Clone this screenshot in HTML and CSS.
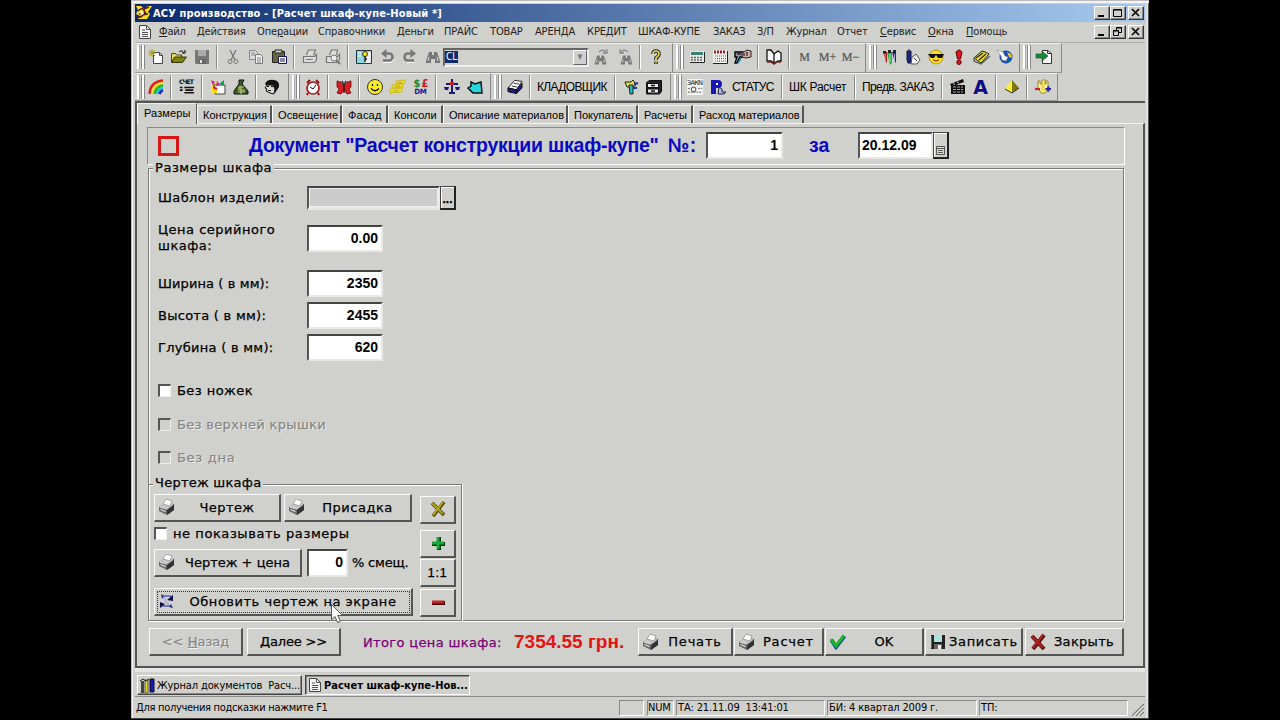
FILE: index.html
```html
<!DOCTYPE html>
<html lang="ru">
<head>
<meta charset="utf-8">
<title>АСУ производство</title>
<link rel="stylesheet" href="styles.css">
</head>
<body>
<svg class="defs" width="0" height="0">
  <symbol id="printer" viewBox="0 0 16 16"><path d="M0 8l6-4 9 1v6l-7 5-8-4z" fill="#666"/><path d="M0 8l6-4 9 1-7 5z" fill="#c8c8c8"/><path d="M8 10l7-5v6l-7 5z" fill="#333"/><path d="M4 5l3-5 6 2-2 5z" fill="#fff" stroke="#888" stroke-width=".7"/><path d="M1.500 10.500l5 2.200" stroke="#ddd" stroke-width="1.300"/><path d="M1 8.300l7 2 6-4.500" stroke="#f4f4f4" stroke-width=".7" fill="none"/></symbol>
  <symbol id="sheet" viewBox="0 0 12 14"><path d="M.5.5h7l4 4v9H.5z" fill="#f4f4f4" stroke="#444"/><path d="M7.500.5v4h4M3 5h3M3 7.500h6M3 9.500h6M3 11.500h6" fill="none" stroke="#555"/></symbol>
  <symbol id="binoc" viewBox="0 0 16 16"><path d="M4 3h3v3h2V3h3l3 9v2h-5v-4H6v4H1v-2z" fill="#777"/><path d="M4 8l-1 4M12 8l1 4" stroke="#ddd"/></symbol>
</svg>
<main class="window">
  <header class="titlebar">
    <svg class="app-icon" viewBox="0 0 17 16"><path d="M1 1h5l3 3 4-3h4l-4 6 2 2-3 5H3l2-3-4-2 2-4z" fill="#ffe21a"/><path d="M3 6q4-4 6-1t-5 4M2 12q5 1 9-5M9 4l5-2M7 10l6-1" stroke="#5a1c10" stroke-width="1.500" fill="none"/><circle cx="7" cy="8" r="1.800" fill="#fff"/></svg>
    <span class="title-text">АСУ производство - [Расчет шкаф-купе-Новый *]</span>
    <div class="winbtns">
      <i><svg viewBox="0 0 14 12"><path d="M3 9h6" stroke="#000" stroke-width="2"/></svg></i>
      <i><svg viewBox="0 0 14 12"><path d="M2.500 2.500h8v7h-8zM2.500 3h8" fill="none" stroke="#000"/></svg></i>
      <i class="close"><svg viewBox="0 0 14 12"><path d="M3 2l7 7M10 2L3 9" stroke="#000" stroke-width="1.600"/></svg></i>
    </div>
  </header>
  <nav class="menu">
    <svg class="menu-doc"><use href="#sheet"/></svg>
    <div class="menu-items">
      <span><u>Ф</u>айл</span><span><u>Д</u>ействия</span><span>Опе<u>р</u>ации</span><span>Справочники</span><span>Деньги</span><span>ПРАЙС</span><span>ТОВАР</span><span>АРЕНДА</span><span>КРЕДИТ</span><span>ШКАФ-КУПЕ</span><span>ЗАКАЗ</span><span>З/П</span><span>Журнал</span><span>Отчет</span><span><u>С</u>ервис</span><span><u>О</u>кна</span><span><u>П</u>омощь</span>
    </div>
    <div class="winbtns">
      <i><svg viewBox="0 0 14 12"><path d="M3 9h6" stroke="#000" stroke-width="2"/></svg></i>
      <i><svg viewBox="0 0 14 12"><path d="M5.500 4V1.500h5v5H8M5.500 2h5M2.500 4.500h5v5h-5zM2.500 5h5" fill="none" stroke="#000"/></svg></i>
      <i class="close"><svg viewBox="0 0 14 12"><path d="M3 2l7 7M10 2L3 9" stroke="#000" stroke-width="1.600"/></svg></i>
    </div>
  </nav>

  <div class="toolbar first">
    <div class="band a1">
      <b><svg viewBox="0 0 16 16"><path d="M5.500 3.500h6l3 3v8h-9z" fill="#fff" stroke="#444"/><path d="M11.500 3.500v3h3" fill="none" stroke="#444"/><path d="M4 0v8M0 4h8M1 1l6 6M7 1L1 7" stroke="#a89c10"/></svg></b>
      <b><svg viewBox="0 0 16 16"><path d="M.5 13V4.500h4l1 1.500h5v2" fill="#e8dc60" stroke="#4a4a08"/><path d="M.5 13.500l3-5.500h12l-4 5.500z" fill="#808018" stroke="#3a3a08"/><path d="M8 3c2-2 4-1 5 1m1-3v3h-3" fill="none" stroke="#000"/></svg></b>
      <b><svg viewBox="0 0 16 16"><path d="M1 1h14v14H2l-1-1z" fill="#777"/><path d="M4 1h8v6H4z" fill="#aaa"/><path d="M5 10h7v5H5z" fill="#666"/><path d="M6 11h2v3H6z" fill="#eee"/></svg></b>
      <s></s>
      <b><svg viewBox="0 0 16 16"><path d="M5 1l5 10M11 1L6 11" stroke="#777" fill="none" stroke-width="1.300"/><circle cx="5" cy="12.500" r="2" fill="none" stroke="#777"/><circle cx="11" cy="12.500" r="2" fill="none" stroke="#777"/></svg></b>
      <b><svg viewBox="0 0 16 16"><path d="M1.500 1.500h6l2 2v7h-8z" fill="#ddd" stroke="#888"/><path d="M7.500 5.500h5l2 2v7h-7z" fill="#eee" stroke="#777"/><path d="M3 4h4M3 6h4M9 9h4M9 11h4M9 13h4" stroke="#888"/></svg></b>
      <b><svg viewBox="0 0 16 16"><path d="M1.500 2.500h12v11h-12z" fill="#67673c" stroke="#222"/><path d="M4 1h7v3H4z" fill="#ccc" stroke="#222"/><path d="M7.500 7.500h8v7h-8z" fill="#fff" stroke="#14145c"/><path d="M9 10h5M9 12h5" stroke="#14145c"/></svg></b>
      <s></s>
      <b><svg viewBox="0 0 16 16"><path d="M4.500 6l2-5h7l-2 5M1.500 7.500h11l2-2v5l-2 3h-11zM4 10.500h7" fill="#ddd" stroke="#777" stroke-width="1.200"/></svg></b>
      <b><svg viewBox="0 0 16 16"><path d="M4.500 6l2-5h6l-1 5M1.500 7.500h11l2-2v5l-2 3h-11z" fill="#ddd" stroke="#777" stroke-width="1.200"/><circle cx="9" cy="9" r="3" fill="#eee" stroke="#777"/><path d="M11 11l4 4" stroke="#777" stroke-width="2"/></svg></b>
      <s></s>
      <b><svg viewBox="0 0 16 16"><path d="M.5 1.500h15v13H.5z" fill="#8ed8dc" stroke="#234"/><path d="M9 3h6v11H9z" fill="#eee"/><circle cx="9" cy="5" r="2.500" fill="#ffe600" stroke="#333"/><path d="M9 7v6M9 10h2" stroke="#222" stroke-width="1.500"/><path d="M2 4h3M2 7h3" stroke="#fff"/></svg></b>
      <b><svg viewBox="0 0 16 16"><path d="M6 4.500h4q3.500 0 3.500 3.500T10 11.500H4" fill="none" stroke="#777" stroke-width="2.400"/><path d="M2 4.500L7.500 0v9z" fill="#777"/><path d="M4 13.500h7q3-.5 4-3.500" fill="none" stroke="#fff"/></svg></b>
      <b><svg viewBox="0 0 16 16"><path d="M10 4.500H6Q2.500 4.500 2.500 8T6 11.500h6" fill="none" stroke="#777" stroke-width="2.400"/><path d="M14 4.500L8.500 0v9z" fill="#777"/><path d="M12 13.500H5" fill="none" stroke="#fff"/></svg></b>
      <b><svg><use href="#binoc"/></svg></b>
      <div class="combo"><mark>CL</mark><em>▼</em></div>
      <b><svg viewBox="0 0 16 16"><use href="#binoc" y="4" width="13" height="13"/><path d="M5 3c3-3 6-2 7 1m1-4v4H9" fill="none" stroke="#888" stroke-width="1.300"/></svg></b>
      <b><svg viewBox="0 0 16 16"><use href="#binoc" x="3" y="4" width="13" height="13"/><path d="M11 3C8 0 5 1 4 4M3 0v4h4" fill="none" stroke="#888" stroke-width="1.300"/></svg></b>
      <s></s>
      <b><svg viewBox="0 0 16 16"><path d="M5 5q0-3 3-3t3 3q0 2-3 4v2M8 12.500v2.500" fill="none" stroke="#222" stroke-width="3.600"/><path d="M5 5q0-3 3-3t3 3q0 2-3 4v2M8 12.800v1.700" fill="none" stroke="#e8e05a" stroke-width="1.600"/></svg></b>
    </div>
    <div class="band a2">
      <b><svg viewBox="0 0 16 16"><path d="M1 2h14v12H1z" fill="#e8e8e8"/><path d="M1 13.500h14.500V3" stroke="#222" fill="none"/><path d="M2 3h12v3H2z" fill="#3c8074"/><path d="M2 8.500h12M2 11h12" stroke="#666" stroke-width="1.500" stroke-dasharray="2 1"/></svg></b>
      <b><svg viewBox="0 0 16 16"><path d="M1 1h14v14H1z" fill="#f2f2ee"/><path d="M1 14.500h14.500V2" stroke="#222" fill="none"/><path d="M2 3h12" stroke="#a02020" stroke-width="3" stroke-dasharray="2 1"/><path d="M3 7h11M3 9.500h11M3 12h11" stroke="#555" stroke-dasharray="1 1"/></svg></b>
      <b><svg viewBox="0 0 16 16"><path d="M0 3h8v5H5l-3 6H0l2-6H0z" fill="#99a" stroke="#000" stroke-width="1.400"/><path d="M7 4l5-3 4 1v6l-5 1-4-1z" fill="#d8b0a0" stroke="#222"/><path d="M2 5h4M9 4v3M12 3v4" stroke="#224" stroke-width="1.300"/><path d="M6 9l-3 5" stroke="#28a" stroke-width="1.500"/></svg></b>
      <s></s>
      <b><svg viewBox="0 0 16 16"><path d="M1 1h4l3 4v9l-3-2H1zM8 5l4-3 3 2v8h-3l-4 2z" fill="#fff" stroke="#111" stroke-width="1.300"/><path d="M1 13h4l3 2 3-2h4" fill="none" stroke="#722" stroke-width="1.500"/></svg></b>
      <s></s>
      <b class="mem">M</b><b class="mem">M+</b><b class="mem">M−</b>
    </div>
    <div class="band a3">
      <b><svg viewBox="0 0 16 16"><path d="M1 3h4v10l-1 1z" fill="#b01818"/><path d="M5 3h5v11L8 16z" fill="#18b838"/><path d="M10 3h4v10l-1 1z" fill="#1828a0"/><path d="M1 2h3v2H1zM6 1h3v3H6zM11 1h3v3h-3z" fill="#222"/><path d="M3 5v8M8 5v8M12.500 5v8" stroke="#fff" stroke-width=".6"/></svg></b>
      <b><svg viewBox="0 0 16 16"><path d="M2 2h4v12H3L2 11z" fill="#1c2890" stroke="#113"/><path d="M7 8l4-3 4 6-3 4H6z" fill="#f4f4f4" stroke="#555"/><path d="M9 9l3 3M3 1h2" stroke="#333"/></svg></b>
      <b><svg viewBox="0 0 16 16"><circle cx="8" cy="8" r="7" fill="#ffe020" stroke="#a87800" stroke-width=".7"/><path d="M0 5h16l-2 4h-4L8 6 6 9H3z" fill="#111"/><path d="M5 11q3 2 6 0" fill="none" stroke="#7c2010"/></svg></b>
      <b><svg viewBox="0 0 16 16"><path d="M5 3q3-4 6 0L9.500 10h-3z" fill="#d81820" stroke="#600"/><circle cx="8" cy="13.300" r="2.200" fill="#d81820" stroke="#600"/></svg></b>
      <b><svg viewBox="0 0 16 16"><path d="M0 9l8-7 3 1 4 2-8 9z" fill="#f0e020" stroke="#222"/><path d="M2 9l7-5M5 11l7-6" stroke="#222" stroke-width="1.200"/><path d="M0 9v3l7 3 9-8" fill="none" stroke="#555" stroke-width="1.300"/></svg></b>
      <b><svg viewBox="0 0 16 16"><circle cx="9" cy="8" r="6.500" fill="#184cc0"/><path d="M10 3l4 2 1 4-3-1z" fill="#e8d020"/><path d="M10 12l4-1-3 3z" fill="#167850"/><path d="M0 1l6 2 2 4 3 1-2 4-4-1-1-4z" fill="#fff" stroke="#777" stroke-width=".5"/></svg></b>
    </div>
    <div class="band a4">
      <b><svg viewBox="0 0 16 16"><path d="M6.500 1.500h5l4 3v10h-9z" fill="#fff" stroke="#333"/><path d="M11.500 1.500v3h4" fill="none" stroke="#333"/><path d="M0 5h6V2l6 5-6 5V9H0z" fill="#188a38" stroke="#0c4c20" stroke-width=".6"/></svg></b>
    </div>
  </div>

  <div class="toolbar second">
    <div class="band b1">
      <b><svg viewBox="0 0 16 16" fill="none" stroke-width="2.500"><path d="M1.500 15Q2 3 15 1.500" stroke="#e02020"/><path d="M4 15Q5 5 15 4" stroke="#ffe020"/><path d="M6.500 15Q8 7 15 6.500" stroke="#20b830"/><path d="M9 15Q10 10 15 9" stroke="#20c0e8"/><path d="M11.500 15q1-3 3.500-3.500" stroke="#2020b0"/></svg></b>
      <s></s>
      <b><svg viewBox="0 0 18 18"><text class="tiny" x="0" y="6" textLength="17">СЧЕТ</text><path d="M1 9.500h3m2 0h11M1 12.500h3m3 0h9M6 15.500h11" stroke="#111" stroke-width="1.800"/></svg></b>
      <s></s>
      <b><svg viewBox="0 0 16 16"><path d="M1 3h6v11H1z" fill="#ffe838"/><path d="M4 6h11v9H5z" fill="#f8f8f8" stroke="#444"/><path d="M1 1l4 2-2 4zM7 2l3 4-4 1z" fill="#d020a0"/><path d="M9 5l5-4v6z" fill="#18a058"/><path d="M2 11l5 2" stroke="#ffd800" stroke-width="3"/><path d="M3 8l4 2" stroke="#e02020" stroke-width="2"/></svg></b>
      <b><svg viewBox="0 0 16 16"><path d="M6 1h5L9 5l6 7v3H1v-3l5-7z" fill="#3c5c28" stroke="#111"/><path d="M11 8H6v3h5v2H5M8 7v8" fill="none" stroke="#b8c870" stroke-width="1.200"/></svg></b>
      <s></s>
      <b><svg viewBox="0 0 16 16"><path d="M1 5q2-5 9-4 6 1 5 7l-4 6-1-4-1-4-6 1z" fill="#111"/><path d="M3 6L1 9l2 1-1 2 4 2 4 1 1-5-2-4z" fill="#d8d8d4" stroke="#111"/><path d="M3 7.500h2M7 7.500h2M4 11.500h3" stroke="#111"/></svg></b>
    </div>
    <div class="band b2">
      <b><svg viewBox="0 0 16 16"><circle cx="8" cy="9" r="6" fill="#fff" stroke="#a01818" stroke-width="1.700"/><path d="M2 4l3-3M14 4l-3-3M3 14l-1 2M13 14l1 2" stroke="#901414" stroke-width="2"/><path d="M5 8l3 2 3-4" stroke="#111" fill="none"/></svg></b>
      <s></s>
      <b><svg viewBox="0 0 16 16"><path d="M1 2l4 1 2 4h2l2-4 4-1v6l-2 2 2 4-4 1-3-4-3 4-4-1 2-4-2-2z" fill="#d81c20" stroke="#701010" stroke-width=".8"/><path d="M8 6v8M6 2l2 4 2-4" fill="none" stroke="#111" stroke-width="1.200"/></svg></b>
      <s></s>
      <b><svg viewBox="0 0 16 16"><circle cx="8" cy="8" r="7.500" fill="#ffec28" stroke="#333"/><path d="M5.500 5v2M10.500 5v2M4 9.500q4 4.500 8 0" stroke="#111" stroke-width="1.300" fill="none"/></svg></b>
      <b><svg viewBox="0 0 16 16"><path d="M6 2l9-1v3L6 5zM2 6l11-1v3L2 9zM0 10l12-1v4L0 14z" fill="#f0e020" stroke="#c4b020" stroke-width=".8"/><path d="M8 3.500h4M5 7.200h5M3 11.800h6" stroke="#c4a810"/></svg></b>
      <b class="big"><svg viewBox="0 0 17 18"><text class="cur g" x="0" y="9">$</text><text class="cur r" x="9" y="9">£</text><text class="cur dm" x="1" y="17" textLength="14">DM</text></svg></b>
      <s></s>
      <b><svg viewBox="0 0 16 16"><path d="M8 0v15M2 5h12M5 14h6" stroke="#181878" stroke-width="2"/><path d="M0 8h5l-1 3H1zM11 8h5l-1 3h-3z" fill="#181878"/><path d="M6 3h4v3H6z" fill="#d02020"/></svg></b>
      <b><svg viewBox="0 0 16 16"><path d="M4 3l4 2 6-2 1 11H6L1 9l3-2z" fill="#28d8e0" stroke="#111" stroke-width="1.500"/></svg></b>
    </div>
    <div class="band b3">
      <b><svg viewBox="0 0 17 16"><path d="M1 9l7-8 8 1-6 9z" fill="#fff" stroke="#222"/><path d="M1 9l9 2v4l-9-2zM10 11l6-7v5l-6 6z" fill="#1c1c88" stroke="#111"/><path d="M7 4l6 1M5 7l6 1" stroke="#333"/></svg></b>
      <s></s><span class="tbtext clerk">КЛАДОВЩИК</span><s></s>
      <b><svg viewBox="0 0 16 16"><path d="M2 3h6l2-2 3 5-3 2H4z" fill="#f0e030" stroke="#222"/><path d="M6 6h4v9H7z" fill="#28b8c8" stroke="#222"/><path d="M10 9h4M11 5l4-1" stroke="#183888" stroke-width="2"/></svg></b>
      <b><svg viewBox="0 0 16 16"><path d="M.5 3.500l3-2h12v11l-2 2.500H.5z" fill="#222" stroke="#111"/><path d="M1.500 4.500h11v4h-11zM1.500 10h11v4h-11z" fill="#eee" stroke="#111"/><path d="M5 6.500h4M5 12h4" stroke="#111" stroke-width="1.500"/></svg></b>
    </div>
    <div class="band b4">
      <b><svg viewBox="0 0 17 17"><path d="M0 0h17v17H0z" fill="#f4f4f2"/><text class="tiny light" x="0" y="6" textLength="17">ЗАКN</text><circle cx="7" cy="11" r="2.500" fill="none" stroke="#333"/><path d="M1 10h2m9 0h4M1 14h15" stroke="#555" stroke-dasharray="2 1"/></svg></b>
      <b><svg viewBox="0 0 16 16"><path d="M1 1h7q4 0 4 4t-4 4H6v6H1z" fill="#1818b0"/><path d="M6 4h2v2H6z" fill="#fff"/><path d="M9 8l3 2v3h4l-2 2H8z" fill="#b8c0e0" stroke="#181848"/></svg></b>
      <span class="tbtext status">СТАТУС</span><s></s><span class="tbtext calc">ШК Расчет</span><s></s><span class="tbtext order">Предв. ЗАКАЗ</span><s></s>
      <b><svg viewBox="0 0 16 16"><path d="M0 5l13-5 1 3-8 3h9v9H1V7z" fill="#111"/><path d="M3 4.500l2 1m2-2.500l2 1" stroke="#ccc"/><path d="M3 8h10M3 10.500h10M3 13h10" stroke="#ccc" stroke-dasharray="3 1" stroke-width=".8"/></svg></b>
      <b class="letter">A</b>
      <s></s>
      <b><svg viewBox="0 0 16 16"><path d="M8 1L1 10l7 4z" fill="#fff030"/><path d="M8 1l7 8-7 5z" fill="#807808"/><path d="M1 10l7 4 7-5" fill="none" stroke="#333"/></svg></b>
      <s></s>
      <b><svg viewBox="0 0 16 16"><path d="M3 2h2v3h2V1h3v4h1V2h2v8l-3 4H6l-3-5z" fill="#fff4a0" stroke="#a08820"/><path d="M7 4v8M9 4v8" stroke="#e0c020"/><path d="M0 10h5" stroke="#d02020" stroke-width="2.200"/><path d="M10.500 10H16M13.300 7.300v5.500" stroke="#2020b0" stroke-width="2"/></svg></b>
    </div>
  </div>

  <section class="mdi">
    <div class="tabs">
      <span class="tab active">Размеры</span><span class="tab">Конструкция</span><span class="tab">Освещение</span><span class="tab">Фасад</span><span class="tab">Консоли</span><span class="tab">Описание материалов</span><span class="tab">Покупатель</span><span class="tab">Расчеты</span><span class="tab">Расход материалов</span>
    </div>
    <div class="page">
      <div class="dochead">
        <div class="redbox"></div>
        <h1>Документ "Расчет конструкции шкаф-купе"</h1>
        <span class="num-label">№:</span>
        <div class="field docnum">1</div>
        <span class="date-label">за</span>
        <div class="field date">20.12.09</div>
        <div class="pick cal"><svg viewBox="0 0 9 9"><path d="M.5.500h8v8h-8zM1 2.500h7M2 4.500h5M2 6.500h5" fill="#ddd" stroke="#333" stroke-width=".8"/></svg></div>
      </div>
      <div class="group sizes">
        <span class="legend l1">Размеры шкафа</span>
        <div class="row tpl"><label class="t-tpl">Шаблон изделий:</label><div class="field grey"></div><div class="pick">...</div></div>
        <div class="row price"><label class="t-ser">Цена серийного<br>шкафа:</label><div class="field">0.00</div></div>
        <div class="row dim"><label class="t-w">Ширина ( в мм):</label><div class="field">2350</div></div>
        <div class="row dim"><label class="t-h">Высота ( в мм):</label><div class="field">2455</div></div>
        <div class="row dim"><label class="t-d">Глубина ( в мм):</label><div class="field">620</div></div>
        <div class="check c1"><i></i><span class="t-legs">Без ножек</span></div>
        <div class="check off"><i></i><span class="t-top">Без верхней крышки</span></div>
        <div class="check off"><i></i><span class="t-bot">Без дна</span></div>
        <div class="group drawing">
          <span class="legend l2">Чертеж шкафа</span>
          <div class="draw-main">
            <div class="draw-row r1">
              <button class="btn draw"><svg class="bi"><use href="#printer"/></svg><span>Чертеж</span></button>
              <button class="btn drill"><svg class="bi"><use href="#printer"/></svg><span>Присадка</span></button>
            </div>
            <div class="check hide"><i></i><span class="t-hide">не показывать размеры</span></div>
            <div class="draw-row r2">
              <button class="btn dprice"><svg class="bi"><use href="#printer"/></svg><span>Чертеж + цена</span></button>
              <div class="field shift">0</div><span class="t-shift">% смещ.</span>
            </div>
            <button class="btn refresh"><svg class="bi" viewBox="0 0 16 16"><path d="M3 3h7q4 0 2 4M2 10q-1 3 3 3h6" fill="none" stroke="#5c5cc0" stroke-width="1.600"/><path d="M4 4q3 1 2 4l4 4" fill="none" stroke="#a8a8e0" stroke-width="1.500"/><path d="M14 2v6L8 7zM1 15V9l5 2z" fill="#10104c"/><path d="M2 1l3 2-2 3zM14 15l-4-1 2-3z" fill="#2c2c80"/></svg><span>Обновить чертеж на экране</span></button>
          </div>
          <div class="draw-side">
            <button class="btn"><svg viewBox="0 0 16 16"><path d="M2 2l12 12M14 1L3 15" stroke="#4c4408" stroke-width="3.600"/><path d="M2 2l11 11M13 1L3 14" stroke="#b0a020" stroke-width="2.200"/></svg></button>
            <button class="btn plus"><svg viewBox="0 0 16 16"><path d="M9 2v13M2 9h13" stroke="#063c10" stroke-width="4"/><path d="M8 2v12M2 8h12" stroke="#18a838" stroke-width="3"/></svg></button>
            <button class="btn one">1:1</button>
            <button class="btn"><svg viewBox="0 0 16 16"><path d="M2 9h13" stroke="#400" stroke-width="4"/><path d="M2 8h12" stroke="#c02830" stroke-width="3"/></svg></button>
          </div>
        </div>
      </div>
      <div class="actions">
        <button class="btn back"><span>&lt;&lt; <u>Н</u>азад</span></button>
        <button class="btn next"><span><u>Д</u>алее &gt;&gt;</span></button>
        <span class="total-label">Итого цена шкафа:</span>
        <strong class="total">7354.55 грн.</strong>
        <button class="btn print"><svg class="bi"><use href="#printer"/></svg><span>Печать</span></button>
        <button class="btn count"><svg class="bi"><use href="#printer"/></svg><span>Расчет</span></button>
        <button class="btn ok"><svg class="bi" viewBox="0 0 16 16"><path d="M1.500 6l4.500 7L14.500 2" fill="none" stroke="#184890" stroke-width="4"/><path d="M1 5l5 7L14 1.500" fill="none" stroke="#18b828" stroke-width="3"/></svg><span>OK</span></button>
        <button class="btn save"><svg class="bi" viewBox="0 0 16 16"><path d="M1 1h14v14H1z" fill="#222"/><path d="M4 1h8v7H4z" fill="#a8e4dc"/><path d="M4 10h8v5H4z" fill="#666"/><path d="M8 11h3v4H8z" fill="#eee"/><path d="M1.500 2v12" stroke="#287c78"/></svg><span>Записать</span></button>
        <button class="btn shut"><svg class="bi" viewBox="0 0 16 16"><path d="M2 2l12 13M14 1L3 15" stroke="#500c0c" stroke-width="4"/><path d="M2 2l11 12M13 1L3 14" stroke="#b02020" stroke-width="2.400"/></svg><span>Закрыть</span></button>
      </div>
    </div>
  </section>

  <div class="tasks">
    <div class="task"><svg viewBox="0 0 15 15"><path d="M1 3h3v12H1z" fill="#444"/><path d="M5 2h3v13H5z" fill="#e8d820" stroke="#222" stroke-width=".7"/><path d="M10 1h4v13h-4z" fill="#1818b0" stroke="#111"/><path d="M0 3l3-2 3 2 3-2" stroke="#222" fill="none"/></svg><span class="t-journal">Журнал документов&nbsp; Расч...</span></div>
    <div class="task on"><svg viewBox="0 0 12 14"><use href="#sheet" width="12" height="14"/></svg><span class="t-new">Расчет шкаф-купе-Нов...</span></div>
  </div>
  <footer class="statusbar">
    <span class="hint">Для получения подсказки нажмите F1</span>
    <span class="cell"></span><span class="cell num">NUM</span><span class="cell ta">ТА: 21.11.09&nbsp; 13:41:01</span><span class="cell bi-cell">БИ: 4 квартал 2009 г.</span><span class="cell tp">ТП:</span>
    <svg class="grip" viewBox="0 0 12 12"><path d="M0 12L12 0M4 12l8-8M8 12l4-4" stroke="#777" stroke-width="1.300"/><path d="M1.500 12L12 1.500M5.500 12L12 5.500M9.500 12L12 9.500" stroke="#fff" stroke-width=".8"/></svg>
  </footer>
  <svg class="cursor" viewBox="0 0 12 20"><path d="M.5.500v15l3.500-3 2.500 6 3-1.300-2.700-5.700h4.700z" fill="#fff" stroke="#555"/></svg>
</main>
</body>
</html>
```
FILE: styles.css
```css
*, *::before { box-sizing: border-box; }
body { margin: 0; background: #000; width: 1280px; height: 720px; overflow: hidden; color: #000;
  font: 11px "DejaVu Sans Condensed", "DejaVu Sans", sans-serif; }
.defs { position: absolute; }
i, s, em, b { font-style: normal; text-decoration: none; }
.window { position: relative; width: 1018px; height: 719px; margin-left: 131px; padding: 4px 4px 0; background: #d0d0cc;
  border-bottom: 1px solid #444; box-shadow: inset 1px 1px #bbb, inset 2px 3px #f4f4f4, inset -1px 0 #555, inset -3px 0 #e0e0dc; }
.window > * { white-space: nowrap; }

.titlebar { height: 18px; display: flex; align-items: center; background: linear-gradient(90deg, #0c2a6c, #a6caf0); color: #fff; }
.app-icon { width: 17px; height: 16px; }
.title-text { flex: 1; padding-left: 1px; font-weight: bold; letter-spacing: .15px; }
.winbtns { display: flex; margin-right: 1px; }
.winbtns i { width: 16px; height: 14px; background: #d0d0cc; border: 1px solid; border-color: #fff #333 #333 #fff; box-shadow: inset -1px -1px #888; }
.winbtns svg { display: block; width: 14px; height: 12px; }
.winbtns .close { margin-left: 2px; }

.menu { height: 21px; display: flex; align-items: center; border-bottom: 1px solid #aaa; padding: 0 0 1px 4px; }
.menu-doc { width: 12px; height: 14px; margin-right: 8px; }
.menu-items { flex: 1; display: grid; grid-template-columns: 38px 60px 61px 79px 47px 46px 45px 52px 51px 75px 44px 29px 51px 43px 48px 38px 50px; color: #222; letter-spacing: -.15px; }

.toolbar { display: flex; }
.toolbar.first { height: 30px; }
.toolbar.second { height: 28px; }
.band { display: flex; align-items: center; border-top: 1px solid #f0f0ee; border-right: 1px solid #888; border-bottom: 1px solid #999; }
.first .band { padding-bottom: 2px; }
.band::before { content: ""; width: 7px; height: 24px; margin: 0 2px 0 3px; border: solid #fff; border-width: 0 2px;
  box-shadow: 1px 0 #888, inset -1px 0 #888, inset 1px 0 #aaa; flex: none; }
.band > b { flex: none; width: 23px; display: flex; justify-content: center; align-items: center; }
.band > b svg { width: 16px; height: 16px; overflow: visible; }
.band > s { flex: none; width: 8px; height: 24px; background: linear-gradient(90deg, transparent 3px, #888 3px 4px, #fff 4px 5px, transparent 5px); }
.a1 { width: 538px; }
.a1::before, .b1::before { margin: 0 0 0 2px; }
.a2 { width: 193px; }
.a3 { width: 154px; }
.a4 { width: 42px; }
.b1 { width: 154px; }
.b2 { width: 202px; }
.b3 { width: 180px; }
.b4 { width: 387px; }
.combo { width: 146px; height: 19px; margin: 0 1px 0 -1px; display: flex; justify-content: space-between; align-items: center; border: 2px solid; border-color: #666 #eee #eee #666; }
.combo mark { background: #0c2a6c; color: #fff; font-size: 10px; line-height: 12px; padding: 0 1px; }
.combo em { width: 14px; height: 15px; border: 1px solid; border-color: #fff #666 #666 #fff; font-size: 7px; line-height: 13px; text-align: center; color: #777; }
.mem { font: 12px "Liberation Serif", serif; color: #555; -webkit-text-stroke: .2px; }
.tiny { font: bold 7px "DejaVu Sans", sans-serif; fill: #111; }
.tiny.light { font-weight: normal; }
.cur { font: bold 11px "DejaVu Sans", sans-serif; }
.g { fill: #188838; } .r { fill: #c82020; }
.dm { font-size: 8px; fill: #1818a0; }
.letter { font: bold 19px "DejaVu Sans", sans-serif; color: #0c0c84; }
.tbtext { flex: none; font: 12px "Liberation Sans", sans-serif; padding-left: 3px; }
.clerk { width: 77px; letter-spacing: -.65px; }
.status { width: 49px; letter-spacing: -.7px; }
.calc { width: 65px; letter-spacing: -.25px; }
.order { width: 79px; letter-spacing: -.6px; }

.mdi { height: 567px; border: solid #555; border-width: 2px 0 2px 2px; }
.tabs { height: 20px; display: flex; align-items: flex-end; font-family: "Liberation Sans", sans-serif; letter-spacing: 0; }
.tab { height: 18px; line-height: 18px; padding-left: 5px; border-top: 1px solid #eee; border-right: 2px solid #555; border-left: 1px solid #fff; }
.tab.active { height: 20px; line-height: 18px; width: 60px; border-right-width: 1px; padding-left: 6px; margin-bottom: -1px; height: 21px; background: #d0d0cc; letter-spacing: .1px; }
.tab:nth-child(2) { width: 75px; } .tab:nth-child(3) { width: 70px; letter-spacing: .1px; } .tab:nth-child(4) { width: 46px; letter-spacing: .2px; } .tab:nth-child(5) { width: 55px; }
.tab:nth-child(6) { width: 125px; } .tab:nth-child(7) { width: 70px; } .tab:nth-child(8) { width: 55px; } .tab:nth-child(9) { width: 111px; }
.page { height: 543px; padding: 3px 18px 0 10px; border-top: 1px solid #f4f4f4; border-right: 2px solid #555;
  font: 13px "DejaVu Sans", sans-serif; -webkit-text-stroke: .25px; }

.dochead { height: 38px; display: flex; align-items: center; border: 1px solid; border-color: #888 #fff #fff #888; padding: 0 0 1px 10px; }
.redbox { width: 21px; height: 20px; border: 3px solid #d41818; margin-right: 70px; }
h1, .num-label, .date-label { margin: 0; font: bold 19.500px "Liberation Sans", sans-serif; color: #0a0ac4; -webkit-text-stroke: 0; }
h1 { width: 419px; letter-spacing: -.23px; }
.num-label { width: 38px; }
.field { height: 27px; width: 76px; background: #fff; border: 2px solid; border-color: #444 #e8e8e6 #e8e8e6 #555; padding-right: 3px; text-align: right;
  font: bold 14px/22px "Liberation Sans", sans-serif; -webkit-text-stroke: 0; }
.field.docnum { width: 77px; }
.date-label { margin-left: 26px; width: 49px; }
.field.date { width: 75px; text-align: left; padding-left: 2px; }
.pick { width: 16px; height: 24px; border: solid; border-width: 1px 2px 2px 1px; border-color: #444 #222 #222 #444; box-shadow: inset 1px 1px #fff; text-align: center; font: bold 12px/24px "Liberation Sans", sans-serif; }
.cal { height: 27px; display: flex; justify-content: center; align-items: flex-end; padding-bottom: 2px; }
.cal svg { width: 9px; height: 9px; }

.group { position: relative; border: 1px solid #777; box-shadow: 1px 1px #fff, inset 1px 1px #fff; }
.legend { position: absolute; top: -9px; left: 4px; padding: 0 2px; background: #d0d0cc; line-height: 16px; }
.l1 { letter-spacing: .55px; }
.l2 { top: -10px; letter-spacing: .25px; }
.t-tpl { letter-spacing: .4px; }
.t-ser { letter-spacing: .5px; }
.t-w { letter-spacing: .1px; }
.t-h, .t-d { letter-spacing: .27px; }
.t-legs { letter-spacing: .45px; }
.t-top { letter-spacing: .33px; }
.t-bot { letter-spacing: .7px; }
.t-hide { letter-spacing: .57px; }
.sizes { height: 453px; margin: 3px 1px 0 1px; padding: 17px 0 0 9px; }
.row { display: flex; align-items: center; }
.row label { width: 149px; line-height: 16px; }
.tpl { height: 24px; }
.tpl .grey { width: 133px; height: 24px; background: #ccc; border-bottom-width: 3px; box-shadow: inset 0 0 0 1px #eee; }
.price { height: 32px; margin: 12px 0 16px; }
.dim { height: 27px; margin-bottom: 5px; }
.check { height: 13px; display: flex; align-items: center; margin-bottom: 20.500px; }
.check i { width: 13px; height: 13px; background: #fff; border: solid; border-width: 2px 1px 1px 2px; border-color: #555 #eee #eee #555; margin-right: 6px; }
.check.off { color: #888; text-shadow: 1px 1px #f0f0f0; }
.check.off i { background: #d0d0cc; }
.c1 { margin-top: 23px; }

.drawing { width: 314px; height: 137px; margin: -1px 0 0 -10px; padding: 9px 5px 0; display: flex; justify-content: space-between; box-shadow: 1px 0 #fff, inset 1px 1px #fff; }
.draw-main { width: 259px; }
.draw-row { display: flex; }
.btn { flex: none; height: 28px; padding: 0; display: flex; align-items: center; background: #d0d0cc; border: solid; border-width: 1px 2px 2px 1px;
  border-color: #fafafa #555 #555 #fafafa; border-radius: 0; color: #000; font: 13px "DejaVu Sans", sans-serif; -webkit-text-stroke: .25px; white-space: nowrap; }
.bi { flex: none; width: 16px; height: 16px; margin-left: 4px; }
.btn span { margin-left: auto; margin-right: auto; }
.draw { width: 127px; margin-right: 3px; letter-spacing: .4px; }
.drill { width: 128px; letter-spacing: .5px; }
.hide { margin: 5px 0 9px; }
.dprice { width: 148px; margin-right: 5px; }
.field.shift { width: 41px; height: 28px; margin-right: 4px; }
.t-shift { line-height: 28px; letter-spacing: -.2px; }
.refresh { width: 259px; margin-top: 11px; outline: 1px dotted #333; outline-offset: -4px; letter-spacing: .52px; }
.draw-side { width: 36px; margin-top: 2px; }
.draw-side .btn { width: 36px; justify-content: center; }
.draw-side svg { width: 16px; height: 16px; }
.draw-side .plus { margin: 6px 0 1px; }
.draw-side .one { margin-bottom: 2px; font: 13px "Liberation Sans", sans-serif; letter-spacing: .6px; }

.actions { display: flex; align-items: center; height: 28px; margin: 7px 0 0 2px; }
.back { width: 94px; margin-right: 4px; color: #888; text-shadow: 1px 1px #f4f4f4; }
.next { width: 94px; margin-right: 22px; letter-spacing: -.2px; }
.total-label { width: 151px; color: #780078; letter-spacing: .35px; }
.total { width: 124px; font: bold 19px "Liberation Sans", sans-serif; color: #e41414; -webkit-text-stroke: 0; }
.print { width: 95px; margin-right: 1px; letter-spacing: .8px; }
.count { width: 90px; margin-right: 1px; letter-spacing: .8px; }
.ok { width: 99px; margin-right: 1px; }
.save { width: 98px; margin-right: 2px; letter-spacing: .65px; }
.shut { width: 99px; letter-spacing: .3px; }

.tasks { height: 29px; border-top: 4px solid #e6e6e4; padding: 3px 0 0 2px; display: flex; gap: 3px; border-bottom: 1px solid #888; }
.task { width: 165px; height: 20px; display: flex; align-items: center; border: 1px solid; border-color: #fff #444 #444 #fff; box-shadow: inset -1px -1px #888; }
.task svg { width: 15px; height: 15px; margin: 0 2px 0 2px; }
.task.on { border-color: #444 #fff #fff #444; box-shadow: inset 1px 1px #888; font-weight: bold; }
.task.on svg { width: 12px; height: 14px; margin: 0 3px; }
.t-journal { letter-spacing: -.12px; }
.statusbar { height: 21px; display: flex; align-items: center; }
.hint { width: 484px; padding-left: 1px; letter-spacing: -.3px; }
.cell { height: 16px; width: 25px; line-height: 14px; border: 1px solid; border-color: #888 #fff #fff #888; margin-right: 3px; letter-spacing: -.15px; }
.num { width: 27px; margin-right: 2px; }
.ta { width: 149px; margin-right: 2px; padding-left: 1px; }
.bi-cell { width: 150px; margin-right: 2px; padding-left: 1px; }
.tp { width: 149px; padding-left: 1px; margin-right: 4px; }
.grip { width: 12px; height: 12px; margin-top: 5px; }
.cursor { position: absolute; left: 200px; top: 604px; width: 12px; height: 20px; }
```
